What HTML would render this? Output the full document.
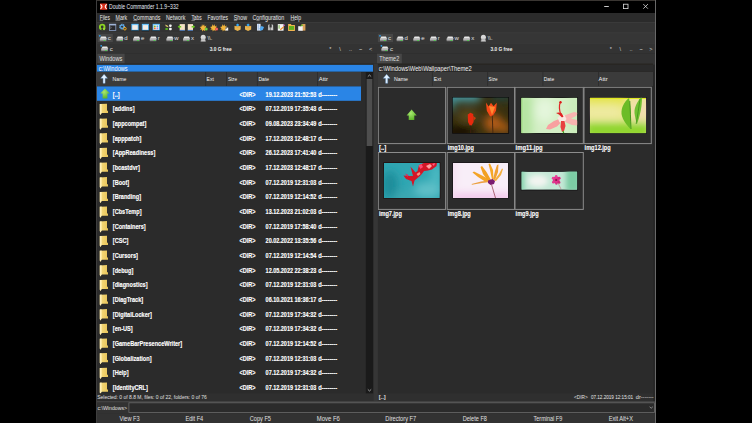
<!DOCTYPE html><html><head><meta charset="utf-8"><style>
html,body{margin:0;padding:0;background:#000;width:752px;height:423px;overflow:hidden;position:relative;}
text{font-family:"Liberation Sans",sans-serif;}
</style></head><body>
<svg width="752" height="423" viewBox="0 0 752 423" style="position:absolute;left:0;top:0" font-family="Liberation Sans, sans-serif"><rect x="0" y="0" width="752" height="423" fill="#000" />
<rect x="96" y="0" width="560" height="423" fill="#2b2b2b" />
<rect x="96" y="0" width="560" height="1" fill="#3a3632" />
<rect x="96" y="0" width="1" height="423" fill="#3e3e3e" />
<rect x="655" y="0" width="1" height="423" fill="#686868" />
<rect x="653" y="13" width="2" height="410" fill="#272727" />
<rect x="97" y="1" width="558" height="12" fill="#000000" />
<rect x="100" y="3.5" width="7.2" height="6.3" fill="#d8301c" />
<path d="M100.5 4.4Q103.4 6.65 100.5 8.9M106.7 4.4Q103.8 6.65 106.7 8.9" stroke="#fff" stroke-width="1.1" fill="none"/>
<text x="109" y="9.0" font-size="6.4" textLength="69.6" lengthAdjust="spacingAndGlyphs" fill="#e6ecf6" >Double Commander 1.1.9~332</text>
<rect x="604.2" y="6" width="4.6" height="0.9" fill="#e0e0e0" />
<rect x="623.6" y="4.2" width="4.4" height="4.4" fill="none" stroke="#e0e0e0" stroke-width="0.8"/>
<path d="M643.3 4.1l4.6 4.6M647.9 4.1l-4.6 4.6" stroke="#e0e0e0" stroke-width="0.8"/>
<rect x="97" y="13" width="558" height="9" fill="#2b2b2b" />
<text x="99.7" y="19.7" font-size="6.3" textLength="10.2" lengthAdjust="spacingAndGlyphs" fill="#e8e8e8" >Files</text>
<text x="115.5" y="19.7" font-size="6.3" textLength="11.7" lengthAdjust="spacingAndGlyphs" fill="#e8e8e8" >Mark</text>
<text x="133.3" y="19.7" font-size="6.3" textLength="27.1" lengthAdjust="spacingAndGlyphs" fill="#e8e8e8" >Commands</text>
<text x="166" y="19.7" font-size="6.3" textLength="19.5" lengthAdjust="spacingAndGlyphs" fill="#e8e8e8" >Network</text>
<text x="191.4" y="19.7" font-size="6.3" textLength="10.2" lengthAdjust="spacingAndGlyphs" fill="#e8e8e8" >Tabs</text>
<text x="207.5" y="19.7" font-size="6.3" textLength="20.5" lengthAdjust="spacingAndGlyphs" fill="#e8e8e8" >Favorites</text>
<text x="233.8" y="19.7" font-size="6.3" textLength="13.2" lengthAdjust="spacingAndGlyphs" fill="#e8e8e8" >Show</text>
<text x="252.5" y="19.7" font-size="6.3" textLength="31.8" lengthAdjust="spacingAndGlyphs" fill="#e8e8e8" >Configuration</text>
<text x="290.6" y="19.7" font-size="6.3" textLength="10.5" lengthAdjust="spacingAndGlyphs" fill="#e8e8e8" >Help</text>
<rect x="99.7" y="20.5" width="3.4" height="0.55" fill="#b8b8b8" />
<rect x="115.5" y="20.5" width="4.8" height="0.55" fill="#b8b8b8" />
<rect x="133.3" y="20.5" width="4.0" height="0.55" fill="#b8b8b8" />
<rect x="191.4" y="20.5" width="3.4" height="0.55" fill="#b8b8b8" />
<rect x="233.8" y="20.5" width="3.4" height="0.55" fill="#b8b8b8" />
<rect x="256.4" y="20.5" width="3.2" height="0.55" fill="#b8b8b8" />
<rect x="290.6" y="20.5" width="4.2" height="0.55" fill="#b8b8b8" />
<rect x="97" y="22" width="558" height="10.5" fill="#333333" />
<g transform="translate(99 23.8)"><circle cx="3.2" cy="3.1" r="2.3" fill="none" stroke="#8cd424" stroke-width="1.9"/><rect x="2.4" y="4.6" width="1.6" height="2" fill="#2f2f2f"/><path d="M4.2 4.4l2.4 0.4l-1.6 1.8z" fill="#a8e040"/></g>
<g transform="translate(109 23.8)"><rect x="0.4" y="0.4" width="6.4" height="6.2" fill="#2a2a2e" stroke="#8aa0c8" stroke-width="0.8"/><rect x="0.4" y="0.3" width="6.4" height="1.3" fill="#a8bde0"/><path d="M1.3 3l1 0.8l-1 0.8" stroke="#d0d0d0" stroke-width="0.5" fill="none"/></g>
<g transform="translate(119.2 23.8)"><circle cx="2.9" cy="2.9" r="2.2" fill="none" stroke="#6ab4f0" stroke-width="1.5" stroke-dasharray="1.2 0.5"/><circle cx="2.9" cy="2.9" r="1.6" fill="none" stroke="#5aa8e8" stroke-width="1"/><circle cx="5.7" cy="4.9" r="1.3" fill="none" stroke="#f4a818" stroke-width="1"/></g>
<g transform="translate(131.4 23.8)"><rect x="0.4" y="0.4" width="6.4" height="6" fill="#f2ece6" stroke="#38a8f0" stroke-width="0.8"/><rect x="0.4" y="0.3" width="6.4" height="1" fill="#70c8ff"/><rect x="0" y="6.5" width="7.2" height="0.7" fill="#0c2030" opacity="0.8"/></g>
<rect x="141" y="22.9" width="9" height="9.3" fill="#2c2c2c" stroke="#4a4444" stroke-width="0.6"/>
<g transform="translate(141.8 23.8)"><rect x="0.4" y="0.4" width="6.4" height="6" fill="#f2ece6" stroke="#38a8f0" stroke-width="0.8"/><rect x="0.4" y="0.3" width="6.4" height="1" fill="#70c8ff"/><rect x="0" y="6.5" width="7.2" height="0.7" fill="#0c2030" opacity="0.8"/></g>
<g transform="translate(152.6 23.8)"><rect x="0.4" y="0.4" width="6.4" height="6" fill="#f2ece6" stroke="#38a8f0" stroke-width="0.8"/><rect x="0.4" y="0.3" width="6.4" height="1" fill="#70c8ff"/><rect x="0" y="6.5" width="7.2" height="0.7" fill="#0c2030" opacity="0.8"/></g>
<g transform="translate(152.6 23.8)"><circle cx="2.2" cy="2.6" r="0.9" fill="#78b828"/><circle cx="4.8" cy="2.6" r="0.9" fill="#48a8f0"/><circle cx="2.2" cy="4.6" r="0.9" fill="#f87020"/><circle cx="4.8" cy="4.6" r="0.9" fill="#b080f0"/></g>
<g transform="translate(164.8 23.8)"><path d="M0.5 0.6l2.8 1.6l0.2 1.3l-2.6-1z" fill="#e8d070"/><ellipse cx="1.8" cy="5.2" rx="1.5" ry="0.9" fill="#58b820"/><rect x="4.3" y="0.6" width="2.6" height="2.5" rx="0.8" fill="#f4f4f4"/><rect x="4.3" y="3.9" width="2.6" height="2.6" rx="0.8" fill="#f4f4f4"/></g>
<g transform="translate(177.7 23.8)"><rect x="2" y="0.3" width="5.2" height="6.3" fill="#f4e2c4"/><rect x="2" y="6.1" width="5.2" height="0.8" fill="#3a70c0"/><path d="M0 3l2-1.8v1h1.5v1.6h-1.5v1z" fill="#68c820"/></g>
<g transform="translate(187.7 23.8)"><rect x="0.1" y="0.3" width="5.2" height="6.3" fill="#f4e2c4"/><rect x="0.1" y="6.1" width="5.2" height="0.8" fill="#3a70c0"/><path d="M7.4 3l-2-1.8v1h-1.5v1.6h1.5v1z" fill="#68c820"/></g>
<g transform="translate(200.4 23.8)"><path d="M1.6 0.2l0.8 2l1.3-1.8l0.5 2.2l1.8-0.8l-0.8 2l1.4 1l-2 0.6l0.2 2l-1.6-1.2l-1.2 1.6l-0.4-2l-2 0.2l1.2-1.6l-1.6-1.2l2 -0.4z" fill="#f2b43a"/></g>
<g transform="translate(200.4 23.8)"><circle cx="5.8" cy="5.2" r="1.6" fill="#5cc028"/><rect x="5" y="5" width="1.6" height="0.5" fill="#f4f4f4" opacity="0.8"/></g>
<g transform="translate(210.8 23.8)"><path d="M1.6 0.2l0.8 2l1.3-1.8l0.5 2.2l1.8-0.8l-0.8 2l1.4 1l-2 0.6l0.2 2l-1.6-1.2l-1.2 1.6l-0.4-2l-2 0.2l1.2-1.6l-1.6-1.2l2 -0.4z" fill="#f2b43a"/></g>
<g transform="translate(210.8 23.8)"><circle cx="5.8" cy="5.2" r="1.6" fill="#e84848"/><rect x="5" y="5" width="1.6" height="0.5" fill="#f4f4f4" opacity="0.8"/></g>
<g transform="translate(220.8 23.8)"><path d="M1.6 0.2l0.8 2l1.3-1.8l0.5 2.2l1.8-0.8l-0.8 2l1.4 1l-2 0.6l0.2 2l-1.6-1.2l-1.2 1.6l-0.4-2l-2 0.2l1.2-1.6l-1.6-1.2l2 -0.4z" fill="#f2b43a"/></g>
<g transform="translate(220.8 23.8)"><rect x="4.6" y="3.8" width="2.8" height="3" fill="#f0f0f0"/><circle cx="5.2" cy="4.3" r="0.7" fill="#101010"/></g>
<g transform="translate(234.3 23.8)"><path d="M0.2 2.2h6.2v3.4l-3.1 1.6l-3.1-1.6z" fill="#e8b450"/><path d="M0.2 2.2l3.1 1.2l3.1-1.2" stroke="#c08830" stroke-width="0.4" fill="none"/><path d="M3.3 -0.2l1.7 1.4l-1.7 1.4l-1.7-1.4z" fill="#38a8f4"/></g>
<g transform="translate(244.8 23.8)"><path d="M0.2 2.2h6.2v3.4l-3.1 1.6l-3.1-1.6z" fill="#e8b450"/><path d="M0.2 2.2l3.1 1.2l3.1-1.2" stroke="#c08830" stroke-width="0.4" fill="none"/><path d="M3.3 -0.2l1.7 1.4l-1.7 1.4l-1.7-1.4z" fill="#38a8f4"/></g>
<g transform="translate(256.7 23.8)"><rect x="0.3" y="0" width="3.6" height="6.8" fill="#dce8f8"/><rect x="1" y="0.5" width="1.2" height="5.5" fill="#a8c4e8"/><path d="M2.8 4.8l2-2.5l2.5 0.8l-1.2 3.2l-2.4 0.7z" fill="#50a8f0"/></g>
<g transform="translate(267.1 23.8)"><path d="M1 1.2l1.4-1v3.6h1v2.6h-2.6z" fill="#b8b8b8"/><path d="M6 1.2l-1.4-1v3.6h-1v2.6h2.6z" fill="#c8c8c8"/></g>
<g transform="translate(277.5 23.8)"><rect x="0.3" y="0.3" width="5.8" height="6.6" fill="#f4f4f4"/><rect x="1.1" y="1.3" width="1" height="3.6" fill="#78b848"/><path d="M2.8 6l3.6-3.2" stroke="#f08828" stroke-width="1.2"/><circle cx="6.6" cy="1.4" r="0.7" fill="#e060e0"/></g>
<g transform="translate(287.9 23.8)"><path d="M0.2 0.3h2.8l0.6 0.8h3.4v6h-6.8z" fill="#f0b450"/><rect x="1.1" y="2.2" width="5" height="3.9" fill="#62b01c"/></g>
<g transform="translate(298 23.8)"><rect x="3.6" y="0.2" width="3.8" height="6.6" fill="#d8a058"/><path d="M0.2 2.4h4.5v4.6h-4.5z" fill="#f2f2f6"/><path d="M1.8 2.8l2.6-2.4l0.8 1.4z" fill="#58c028"/></g>
<rect x="97" y="22" width="558" height="0.8" fill="#3c3c3c" />
<rect x="97" y="32.5" width="558" height="10.5" fill="#363636" />
<rect x="97" y="32.5" width="558" height="0.8" fill="#3e3e3e" />
<rect x="97.7" y="33.9" width="15.1" height="8.2" fill="#474747" />
<path d="M99.89999999999999 38.8l1.2-2.2h4.6l1.2 2.2z" fill="#e8e8e8"/>
<rect x="99.8" y="38.8" width="6.6" height="2.4" fill="#8a8a8a"/>
<rect x="99.8" y="38.8" width="6.6" height="0.6" fill="#f4f4f4"/>
<rect x="103.7" y="40.0" width="1.8" height="0.9" fill="#48d048"/>
<text x="107.7" y="40.3" font-size="6" fill="#e0e0e0" >c</text>
<path d="M116.54999999999998 38.8l1.2-2.2h4.6l1.2 2.2z" fill="#e8e8e8"/>
<rect x="116.44999999999999" y="38.8" width="6.6" height="2.4" fill="#8a8a8a"/>
<rect x="116.44999999999999" y="38.8" width="6.6" height="0.6" fill="#f4f4f4"/>
<rect x="120.35" y="40.0" width="1.8" height="0.9" fill="#48d048"/>
<text x="124.35" y="40.3" font-size="6" fill="#e0e0e0" >d</text>
<path d="M133.2 38.8l1.2-2.2h4.6l1.2 2.2z" fill="#e8e8e8"/>
<rect x="133.1" y="38.8" width="6.6" height="2.4" fill="#8a8a8a"/>
<rect x="133.1" y="38.8" width="6.6" height="0.6" fill="#f4f4f4"/>
<rect x="137.0" y="40.0" width="1.8" height="0.9" fill="#48d048"/>
<text x="141.0" y="40.3" font-size="6" fill="#e0e0e0" >e</text>
<path d="M149.85 38.8l1.2-2.2h4.6l1.2 2.2z" fill="#e8e8e8"/>
<rect x="149.75" y="38.8" width="6.6" height="2.4" fill="#8a8a8a"/>
<rect x="149.75" y="38.8" width="6.6" height="0.6" fill="#f4f4f4"/>
<rect x="153.65" y="40.0" width="1.8" height="0.9" fill="#48d048"/>
<text x="157.65" y="40.3" font-size="6" fill="#e0e0e0" >r</text>
<path d="M166.49999999999997 38.8l1.2-2.2h4.6l1.2 2.2z" fill="#e8e8e8"/>
<rect x="166.39999999999998" y="38.8" width="6.6" height="2.4" fill="#8a8a8a"/>
<rect x="166.39999999999998" y="38.8" width="6.6" height="0.6" fill="#f4f4f4"/>
<rect x="170.29999999999998" y="40.0" width="1.8" height="0.9" fill="#48d048"/>
<text x="174.29999999999998" y="40.3" font-size="6" fill="#e0e0e0" >w</text>
<path d="M183.15 38.8l1.2-2.2h4.6l1.2 2.2z" fill="#e8e8e8"/>
<rect x="183.05" y="38.8" width="6.6" height="2.4" fill="#8a8a8a"/>
<rect x="183.05" y="38.8" width="6.6" height="0.6" fill="#f4f4f4"/>
<rect x="186.95000000000002" y="40.0" width="1.8" height="0.9" fill="#48d048"/>
<text x="190.95000000000002" y="40.3" font-size="6" fill="#e0e0e0" >x</text>
<circle cx="203.2" cy="37.3" r="2.5" fill="#d8d8d8"/><rect x="201.2" y="38.6" width="4" height="2.6" fill="#b8b8b8"/><rect x="200.6" y="40.6" width="5.2" height="0.8" fill="#e0e0e0"/>
<text x="207.5" y="40.3" font-size="5.8" fill="#e0e0e0" >\\.</text>
<circle cx="99.8" cy="35.8" r="0.9" fill="#30a0f0"/>
<rect x="377.9" y="33.9" width="15.1" height="8.2" fill="#474747" />
<path d="M380.1 38.8l1.2-2.2h4.6l1.2 2.2z" fill="#e8e8e8"/>
<rect x="380.0" y="38.8" width="6.6" height="2.4" fill="#8a8a8a"/>
<rect x="380.0" y="38.8" width="6.6" height="0.6" fill="#f4f4f4"/>
<rect x="383.9" y="40.0" width="1.8" height="0.9" fill="#48d048"/>
<text x="387.9" y="40.3" font-size="6" fill="#e0e0e0" >c</text>
<path d="M396.75 38.8l1.2-2.2h4.6l1.2 2.2z" fill="#e8e8e8"/>
<rect x="396.65" y="38.8" width="6.6" height="2.4" fill="#8a8a8a"/>
<rect x="396.65" y="38.8" width="6.6" height="0.6" fill="#f4f4f4"/>
<rect x="400.54999999999995" y="40.0" width="1.8" height="0.9" fill="#48d048"/>
<text x="404.54999999999995" y="40.3" font-size="6" fill="#e0e0e0" >d</text>
<path d="M413.40000000000003 38.8l1.2-2.2h4.6l1.2 2.2z" fill="#e8e8e8"/>
<rect x="413.3" y="38.8" width="6.6" height="2.4" fill="#8a8a8a"/>
<rect x="413.3" y="38.8" width="6.6" height="0.6" fill="#f4f4f4"/>
<rect x="417.2" y="40.0" width="1.8" height="0.9" fill="#48d048"/>
<text x="421.2" y="40.3" font-size="6" fill="#e0e0e0" >e</text>
<path d="M430.05 38.8l1.2-2.2h4.6l1.2 2.2z" fill="#e8e8e8"/>
<rect x="429.95" y="38.8" width="6.6" height="2.4" fill="#8a8a8a"/>
<rect x="429.95" y="38.8" width="6.6" height="0.6" fill="#f4f4f4"/>
<rect x="433.84999999999997" y="40.0" width="1.8" height="0.9" fill="#48d048"/>
<text x="437.84999999999997" y="40.3" font-size="6" fill="#e0e0e0" >r</text>
<path d="M446.70000000000005 38.8l1.2-2.2h4.6l1.2 2.2z" fill="#e8e8e8"/>
<rect x="446.6" y="38.8" width="6.6" height="2.4" fill="#8a8a8a"/>
<rect x="446.6" y="38.8" width="6.6" height="0.6" fill="#f4f4f4"/>
<rect x="450.5" y="40.0" width="1.8" height="0.9" fill="#48d048"/>
<text x="454.5" y="40.3" font-size="6" fill="#e0e0e0" >w</text>
<path d="M463.35 38.8l1.2-2.2h4.6l1.2 2.2z" fill="#e8e8e8"/>
<rect x="463.25" y="38.8" width="6.6" height="2.4" fill="#8a8a8a"/>
<rect x="463.25" y="38.8" width="6.6" height="0.6" fill="#f4f4f4"/>
<rect x="467.15" y="40.0" width="1.8" height="0.9" fill="#48d048"/>
<text x="471.15" y="40.3" font-size="6" fill="#e0e0e0" >x</text>
<circle cx="483.4" cy="37.3" r="2.5" fill="#d8d8d8"/><rect x="481.4" y="38.6" width="4" height="2.6" fill="#b8b8b8"/><rect x="480.79999999999995" y="40.6" width="5.2" height="0.8" fill="#e0e0e0"/>
<text x="487.7" y="40.3" font-size="5.8" fill="#e0e0e0" >\\.</text>
<circle cx="380.0" cy="35.8" r="0.9" fill="#30a0f0"/>
<rect x="97" y="43" width="558" height="10.7" fill="#333333" />
<rect x="97" y="43" width="558" height="0.7" fill="#3a3a3a" />
<path d="M101.3 48.8l1.2-2.2h4.6l1.2 2.2z" fill="#e8e8e8"/>
<rect x="101.2" y="48.8" width="6.6" height="2.4" fill="#8a8a8a"/>
<rect x="101.2" y="48.8" width="6.6" height="0.6" fill="#f4f4f4"/>
<rect x="105.10000000000001" y="50.0" width="1.8" height="0.9" fill="#48d048"/>
<circle cx="101.2" cy="45.8" r="0.9" fill="#30a0f0"/>
<text x="109.8" y="50.8" font-size="6" fill="#e0e0e0" >c</text>
<path d="M381.5 48.8l1.2-2.2h4.6l1.2 2.2z" fill="#e8e8e8"/>
<rect x="381.4" y="48.8" width="6.6" height="2.4" fill="#8a8a8a"/>
<rect x="381.4" y="48.8" width="6.6" height="0.6" fill="#f4f4f4"/>
<rect x="385.29999999999995" y="50.0" width="1.8" height="0.9" fill="#48d048"/>
<circle cx="381.4" cy="45.8" r="0.9" fill="#30a0f0"/>
<text x="390.0" y="50.8" font-size="6" fill="#e0e0e0" >c</text>
<text x="209.7" y="50.9" font-size="5.8" textLength="21.9" lengthAdjust="spacingAndGlyphs" font-weight="bold" fill="#f0f0f0" >3.0 G free</text>
<text x="490.5" y="50.9" font-size="5.8" textLength="21.9" lengthAdjust="spacingAndGlyphs" font-weight="bold" fill="#f0f0f0" >3.0 G free</text>
<text x="329.3" y="50.8" font-size="5.5" fill="#d8d8d8" >*</text>
<text x="339.2" y="50.8" font-size="5.5" fill="#d8d8d8" >\</text>
<text x="349.1" y="50.8" font-size="5.5" fill="#d8d8d8" >..</text>
<text x="359.0" y="50.8" font-size="5.5" fill="#d8d8d8" >~</text>
<text x="368.90000000000003" y="50.8" font-size="5.5" fill="#d8d8d8" >&lt;</text>
<text x="609.7" y="50.8" font-size="5.5" fill="#d8d8d8" >*</text>
<text x="619.6" y="50.8" font-size="5.5" fill="#d8d8d8" >\</text>
<text x="629.5" y="50.8" font-size="5.5" fill="#d8d8d8" >..</text>
<text x="639.4000000000001" y="50.8" font-size="5.5" fill="#d8d8d8" >~</text>
<text x="649.3000000000001" y="50.8" font-size="5.5" fill="#d8d8d8" >&gt;</text>
<rect x="97" y="53.7" width="558" height="11" fill="#333333" />
<rect x="97.4" y="53.7" width="27.2" height="9.8" fill="#474747" />
<text x="99.6" y="61.2" font-size="6.6" textLength="22.6" lengthAdjust="spacingAndGlyphs" fill="#e0e0e0" >Windows</text>
<rect x="377" y="53.7" width="24.8" height="9.8" fill="#474747" />
<text x="379.2" y="61.2" font-size="6.6" textLength="20" lengthAdjust="spacingAndGlyphs" fill="#e0e0e0" >Theme2</text>
<rect x="97" y="64.6" width="276" height="7.2" fill="#2a85e6" />
<text x="98.8" y="70.9" font-size="6.7" textLength="28.9" lengthAdjust="spacingAndGlyphs" fill="#ffffff" >c:\Windows</text>
<rect x="377" y="64.6" width="276" height="7.4" fill="#2b2b2b" />
<text x="378.7" y="70.9" font-size="6.7" textLength="93" lengthAdjust="spacingAndGlyphs" fill="#f0f0f0" >c:\Windows\Web\Wallpaper\Theme2</text>
<rect x="97" y="63.6" width="556" height="1" fill="#26231f" />
<rect x="97" y="71.8" width="556" height="0.6" fill="#2a2622" />
<rect x="97" y="72" width="264" height="14" fill="#3b3b3b" />
<rect x="205.3" y="72" width="0.8" height="14" fill="#2c2c2c" />
<rect x="226" y="72" width="0.8" height="14" fill="#2c2c2c" />
<rect x="256.9" y="72" width="0.8" height="14" fill="#2c2c2c" />
<rect x="317.2" y="72" width="0.8" height="14" fill="#2c2c2c" />
<text x="112.6" y="80.9" font-size="5.5" textLength="13.7" lengthAdjust="spacingAndGlyphs" fill="#f4f4f4" >Name</text>
<text x="206.6" y="80.9" font-size="5.5" textLength="7.2" lengthAdjust="spacingAndGlyphs" fill="#f4f4f4" >Ext</text>
<text x="227.9" y="80.9" font-size="5.5" textLength="9.1" lengthAdjust="spacingAndGlyphs" fill="#f4f4f4" >Size</text>
<text x="258.5" y="80.9" font-size="5.5" textLength="10.6" lengthAdjust="spacingAndGlyphs" fill="#f4f4f4" >Date</text>
<text x="318.8" y="80.9" font-size="5.5" textLength="9.1" lengthAdjust="spacingAndGlyphs" fill="#f4f4f4" >Attr</text>
<path d="M104.1 74.3L107.5 78.3H105.1V83.3H103.1V78.3H100.7Z" fill="#e4f2ff" stroke="#6aa8e8" stroke-width="0.35"/>
<rect x="377" y="72" width="276" height="14" fill="#3b3b3b" />
<rect x="431.9" y="72" width="0.8" height="14" fill="#2c2c2c" />
<rect x="487.3" y="72" width="0.8" height="14" fill="#2c2c2c" />
<rect x="542.5" y="72" width="0.8" height="14" fill="#2c2c2c" />
<rect x="598" y="72" width="0.8" height="14" fill="#2c2c2c" />
<text x="394" y="80.9" font-size="5.5" textLength="14" lengthAdjust="spacingAndGlyphs" fill="#f4f4f4" >Name</text>
<text x="433.8" y="80.9" font-size="5.5" textLength="7.4" lengthAdjust="spacingAndGlyphs" fill="#f4f4f4" >Ext</text>
<text x="488.6" y="80.9" font-size="5.5" textLength="8.9" lengthAdjust="spacingAndGlyphs" fill="#f4f4f4" >Size</text>
<text x="543.8" y="80.9" font-size="5.5" textLength="10.4" lengthAdjust="spacingAndGlyphs" fill="#f4f4f4" >Date</text>
<text x="598.6" y="80.9" font-size="5.5" textLength="9.0" lengthAdjust="spacingAndGlyphs" fill="#f4f4f4" >Attr</text>
<path d="M386.65 74.3L390 78.3H387.65V83.3H385.65V78.3H383.3Z" fill="#e4f2ff" stroke="#6aa8e8" stroke-width="0.35"/>
<rect x="97" y="86" width="269" height="308" fill="#2b2b2b" />
<rect x="97" y="86.4" width="264" height="14.4" fill="#2a85e6" />
<path d="M105 88.4L109.8 93.6H107.4V98.5H102.6V93.6H100.2Z" fill="url(#arrowg)"/>
<text transform="translate(112.8 96.7) scale(0.86 1)" font-size="6.5" font-weight="bold" fill="#ffffff" stroke="#ffffff" stroke-width="0.14">[..]</text>
<text x="239.6" y="96.7" font-size="6.4" textLength="16.0" lengthAdjust="spacingAndGlyphs" font-weight="bold" fill="#ffffff" stroke="#ffffff" stroke-width="0.14">&lt;DIR&gt;</text>
<text x="265.6" y="96.7" font-size="6.4" textLength="50.8" lengthAdjust="spacingAndGlyphs" font-weight="bold" fill="#ffffff" stroke="#ffffff" stroke-width="0.14">19.12.2023 21:52:53</text>
<text x="318.2" y="96.7" font-size="6.4" textLength="18.9" lengthAdjust="spacingAndGlyphs" font-weight="bold" fill="#ffffff" stroke="#ffffff" stroke-width="0.14">d--------</text>
<path d="M99.8 104.065L107 103.765V110.565L108 111.065V113.065H101.5L100.5 115.065L99.8 113.565Z" fill="url(#fold)"/>
<path d="M99.8 104.065L101.6 103.965V113.065L100.5 115.065L99.8 113.565Z" fill="#fff0b8"/>
<text transform="translate(112.8 111.365) scale(0.86 1)" font-size="6.5" font-weight="bold" fill="#ffffff" stroke="#ffffff" stroke-width="0.14">[addins]</text>
<text x="239.6" y="111.365" font-size="6.4" textLength="16.0" lengthAdjust="spacingAndGlyphs" font-weight="bold" fill="#ffffff" stroke="#ffffff" stroke-width="0.14">&lt;DIR&gt;</text>
<text x="265.6" y="111.365" font-size="6.4" textLength="50.8" lengthAdjust="spacingAndGlyphs" font-weight="bold" fill="#ffffff" stroke="#ffffff" stroke-width="0.14">07.12.2019 17:35:43</text>
<text x="318.2" y="111.365" font-size="6.4" textLength="18.9" lengthAdjust="spacingAndGlyphs" font-weight="bold" fill="#ffffff" stroke="#ffffff" stroke-width="0.14">d--------</text>
<path d="M99.8 118.73L107 118.43V125.23L108 125.73V127.73H101.5L100.5 129.73000000000002L99.8 128.23000000000002Z" fill="url(#fold)"/>
<path d="M99.8 118.73L101.6 118.63000000000001V127.73L100.5 129.73000000000002L99.8 128.23000000000002Z" fill="#fff0b8"/>
<text transform="translate(112.8 126.03) scale(0.86 1)" font-size="6.5" font-weight="bold" fill="#ffffff" stroke="#ffffff" stroke-width="0.14">[appcompat]</text>
<text x="239.6" y="126.03" font-size="6.4" textLength="16.0" lengthAdjust="spacingAndGlyphs" font-weight="bold" fill="#ffffff" stroke="#ffffff" stroke-width="0.14">&lt;DIR&gt;</text>
<text x="265.6" y="126.03" font-size="6.4" textLength="50.8" lengthAdjust="spacingAndGlyphs" font-weight="bold" fill="#ffffff" stroke="#ffffff" stroke-width="0.14">09.08.2023 23:34:49</text>
<text x="318.2" y="126.03" font-size="6.4" textLength="18.9" lengthAdjust="spacingAndGlyphs" font-weight="bold" fill="#ffffff" stroke="#ffffff" stroke-width="0.14">d--------</text>
<path d="M99.8 133.395L107 133.095V139.895L108 140.395V142.395H101.5L100.5 144.395L99.8 142.895Z" fill="url(#fold)"/>
<path d="M99.8 133.395L101.6 133.295V142.395L100.5 144.395L99.8 142.895Z" fill="#fff0b8"/>
<text transform="translate(112.8 140.695) scale(0.86 1)" font-size="6.5" font-weight="bold" fill="#ffffff" stroke="#ffffff" stroke-width="0.14">[apppatch]</text>
<text x="239.6" y="140.695" font-size="6.4" textLength="16.0" lengthAdjust="spacingAndGlyphs" font-weight="bold" fill="#ffffff" stroke="#ffffff" stroke-width="0.14">&lt;DIR&gt;</text>
<text x="265.6" y="140.695" font-size="6.4" textLength="50.8" lengthAdjust="spacingAndGlyphs" font-weight="bold" fill="#ffffff" stroke="#ffffff" stroke-width="0.14">17.12.2023 12:48:17</text>
<text x="318.2" y="140.695" font-size="6.4" textLength="18.9" lengthAdjust="spacingAndGlyphs" font-weight="bold" fill="#ffffff" stroke="#ffffff" stroke-width="0.14">d--------</text>
<path d="M99.8 148.06L107 147.76V154.56L108 155.06V157.06H101.5L100.5 159.06L99.8 157.56Z" fill="url(#fold)"/>
<path d="M99.8 148.06L101.6 147.95999999999998V157.06L100.5 159.06L99.8 157.56Z" fill="#fff0b8"/>
<text transform="translate(112.8 155.35999999999999) scale(0.86 1)" font-size="6.5" font-weight="bold" fill="#ffffff" stroke="#ffffff" stroke-width="0.14">[AppReadiness]</text>
<text x="239.6" y="155.35999999999999" font-size="6.4" textLength="16.0" lengthAdjust="spacingAndGlyphs" font-weight="bold" fill="#ffffff" stroke="#ffffff" stroke-width="0.14">&lt;DIR&gt;</text>
<text x="265.6" y="155.35999999999999" font-size="6.4" textLength="50.8" lengthAdjust="spacingAndGlyphs" font-weight="bold" fill="#ffffff" stroke="#ffffff" stroke-width="0.14">26.12.2023 17:41:40</text>
<text x="318.2" y="155.35999999999999" font-size="6.4" textLength="18.9" lengthAdjust="spacingAndGlyphs" font-weight="bold" fill="#ffffff" stroke="#ffffff" stroke-width="0.14">d--------</text>
<path d="M99.8 162.725L107 162.42499999999998V169.225L108 169.725V171.725H101.5L100.5 173.725L99.8 172.225Z" fill="url(#fold)"/>
<path d="M99.8 162.725L101.6 162.62499999999997V171.725L100.5 173.725L99.8 172.225Z" fill="#fff0b8"/>
<text transform="translate(112.8 170.02499999999998) scale(0.86 1)" font-size="6.5" font-weight="bold" fill="#ffffff" stroke="#ffffff" stroke-width="0.14">[bcastdvr]</text>
<text x="239.6" y="170.02499999999998" font-size="6.4" textLength="16.0" lengthAdjust="spacingAndGlyphs" font-weight="bold" fill="#ffffff" stroke="#ffffff" stroke-width="0.14">&lt;DIR&gt;</text>
<text x="265.6" y="170.02499999999998" font-size="6.4" textLength="50.8" lengthAdjust="spacingAndGlyphs" font-weight="bold" fill="#ffffff" stroke="#ffffff" stroke-width="0.14">17.12.2023 12:48:17</text>
<text x="318.2" y="170.02499999999998" font-size="6.4" textLength="18.9" lengthAdjust="spacingAndGlyphs" font-weight="bold" fill="#ffffff" stroke="#ffffff" stroke-width="0.14">d--------</text>
<path d="M99.8 177.39L107 177.08999999999997V183.89L108 184.39V186.39H101.5L100.5 188.39L99.8 186.89Z" fill="url(#fold)"/>
<path d="M99.8 177.39L101.6 177.28999999999996V186.39L100.5 188.39L99.8 186.89Z" fill="#fff0b8"/>
<text transform="translate(112.8 184.68999999999997) scale(0.86 1)" font-size="6.5" font-weight="bold" fill="#ffffff" stroke="#ffffff" stroke-width="0.14">[Boot]</text>
<text x="239.6" y="184.68999999999997" font-size="6.4" textLength="16.0" lengthAdjust="spacingAndGlyphs" font-weight="bold" fill="#ffffff" stroke="#ffffff" stroke-width="0.14">&lt;DIR&gt;</text>
<text x="265.6" y="184.68999999999997" font-size="6.4" textLength="50.8" lengthAdjust="spacingAndGlyphs" font-weight="bold" fill="#ffffff" stroke="#ffffff" stroke-width="0.14">07.12.2019 12:31:03</text>
<text x="318.2" y="184.68999999999997" font-size="6.4" textLength="18.9" lengthAdjust="spacingAndGlyphs" font-weight="bold" fill="#ffffff" stroke="#ffffff" stroke-width="0.14">d--------</text>
<path d="M99.8 192.055L107 191.755V198.555L108 199.055V201.055H101.5L100.5 203.055L99.8 201.555Z" fill="url(#fold)"/>
<path d="M99.8 192.055L101.6 191.95499999999998V201.055L100.5 203.055L99.8 201.555Z" fill="#fff0b8"/>
<text transform="translate(112.8 199.355) scale(0.86 1)" font-size="6.5" font-weight="bold" fill="#ffffff" stroke="#ffffff" stroke-width="0.14">[Branding]</text>
<text x="239.6" y="199.355" font-size="6.4" textLength="16.0" lengthAdjust="spacingAndGlyphs" font-weight="bold" fill="#ffffff" stroke="#ffffff" stroke-width="0.14">&lt;DIR&gt;</text>
<text x="265.6" y="199.355" font-size="6.4" textLength="50.8" lengthAdjust="spacingAndGlyphs" font-weight="bold" fill="#ffffff" stroke="#ffffff" stroke-width="0.14">07.12.2019 12:14:52</text>
<text x="318.2" y="199.355" font-size="6.4" textLength="18.9" lengthAdjust="spacingAndGlyphs" font-weight="bold" fill="#ffffff" stroke="#ffffff" stroke-width="0.14">d--------</text>
<path d="M99.8 206.72L107 206.42V213.22L108 213.72V215.72H101.5L100.5 217.72L99.8 216.22Z" fill="url(#fold)"/>
<path d="M99.8 206.72L101.6 206.61999999999998V215.72L100.5 217.72L99.8 216.22Z" fill="#fff0b8"/>
<text transform="translate(112.8 214.01999999999998) scale(0.86 1)" font-size="6.5" font-weight="bold" fill="#ffffff" stroke="#ffffff" stroke-width="0.14">[CbsTemp]</text>
<text x="239.6" y="214.01999999999998" font-size="6.4" textLength="16.0" lengthAdjust="spacingAndGlyphs" font-weight="bold" fill="#ffffff" stroke="#ffffff" stroke-width="0.14">&lt;DIR&gt;</text>
<text x="265.6" y="214.01999999999998" font-size="6.4" textLength="50.8" lengthAdjust="spacingAndGlyphs" font-weight="bold" fill="#ffffff" stroke="#ffffff" stroke-width="0.14">13.12.2023 21:02:03</text>
<text x="318.2" y="214.01999999999998" font-size="6.4" textLength="18.9" lengthAdjust="spacingAndGlyphs" font-weight="bold" fill="#ffffff" stroke="#ffffff" stroke-width="0.14">d--------</text>
<path d="M99.8 221.385L107 221.08499999999998V227.885L108 228.385V230.385H101.5L100.5 232.385L99.8 230.885Z" fill="url(#fold)"/>
<path d="M99.8 221.385L101.6 221.28499999999997V230.385L100.5 232.385L99.8 230.885Z" fill="#fff0b8"/>
<text transform="translate(112.8 228.68499999999997) scale(0.86 1)" font-size="6.5" font-weight="bold" fill="#ffffff" stroke="#ffffff" stroke-width="0.14">[Containers]</text>
<text x="239.6" y="228.68499999999997" font-size="6.4" textLength="16.0" lengthAdjust="spacingAndGlyphs" font-weight="bold" fill="#ffffff" stroke="#ffffff" stroke-width="0.14">&lt;DIR&gt;</text>
<text x="265.6" y="228.68499999999997" font-size="6.4" textLength="50.8" lengthAdjust="spacingAndGlyphs" font-weight="bold" fill="#ffffff" stroke="#ffffff" stroke-width="0.14">07.12.2019 17:58:40</text>
<text x="318.2" y="228.68499999999997" font-size="6.4" textLength="18.9" lengthAdjust="spacingAndGlyphs" font-weight="bold" fill="#ffffff" stroke="#ffffff" stroke-width="0.14">d--------</text>
<path d="M99.8 236.04999999999998L107 235.74999999999997V242.54999999999998L108 243.04999999999998V245.04999999999998H101.5L100.5 247.04999999999998L99.8 245.54999999999998Z" fill="url(#fold)"/>
<path d="M99.8 236.04999999999998L101.6 235.94999999999996V245.04999999999998L100.5 247.04999999999998L99.8 245.54999999999998Z" fill="#fff0b8"/>
<text transform="translate(112.8 243.34999999999997) scale(0.86 1)" font-size="6.5" font-weight="bold" fill="#ffffff" stroke="#ffffff" stroke-width="0.14">[CSC]</text>
<text x="239.6" y="243.34999999999997" font-size="6.4" textLength="16.0" lengthAdjust="spacingAndGlyphs" font-weight="bold" fill="#ffffff" stroke="#ffffff" stroke-width="0.14">&lt;DIR&gt;</text>
<text x="265.6" y="243.34999999999997" font-size="6.4" textLength="50.8" lengthAdjust="spacingAndGlyphs" font-weight="bold" fill="#ffffff" stroke="#ffffff" stroke-width="0.14">20.02.2022 13:35:56</text>
<text x="318.2" y="243.34999999999997" font-size="6.4" textLength="18.9" lengthAdjust="spacingAndGlyphs" font-weight="bold" fill="#ffffff" stroke="#ffffff" stroke-width="0.14">d--------</text>
<path d="M99.8 250.715L107 250.415V257.215L108 257.715V259.715H101.5L100.5 261.715L99.8 260.215Z" fill="url(#fold)"/>
<path d="M99.8 250.715L101.6 250.61499999999998V259.715L100.5 261.715L99.8 260.215Z" fill="#fff0b8"/>
<text transform="translate(112.8 258.01500000000004) scale(0.86 1)" font-size="6.5" font-weight="bold" fill="#ffffff" stroke="#ffffff" stroke-width="0.14">[Cursors]</text>
<text x="239.6" y="258.01500000000004" font-size="6.4" textLength="16.0" lengthAdjust="spacingAndGlyphs" font-weight="bold" fill="#ffffff" stroke="#ffffff" stroke-width="0.14">&lt;DIR&gt;</text>
<text x="265.6" y="258.01500000000004" font-size="6.4" textLength="50.8" lengthAdjust="spacingAndGlyphs" font-weight="bold" fill="#ffffff" stroke="#ffffff" stroke-width="0.14">07.12.2019 12:14:54</text>
<text x="318.2" y="258.01500000000004" font-size="6.4" textLength="18.9" lengthAdjust="spacingAndGlyphs" font-weight="bold" fill="#ffffff" stroke="#ffffff" stroke-width="0.14">d--------</text>
<path d="M99.8 265.38L107 265.08V271.88L108 272.38V274.38H101.5L100.5 276.38L99.8 274.88Z" fill="url(#fold)"/>
<path d="M99.8 265.38L101.6 265.28V274.38L100.5 276.38L99.8 274.88Z" fill="#fff0b8"/>
<text transform="translate(112.8 272.68) scale(0.86 1)" font-size="6.5" font-weight="bold" fill="#ffffff" stroke="#ffffff" stroke-width="0.14">[debug]</text>
<text x="239.6" y="272.68" font-size="6.4" textLength="16.0" lengthAdjust="spacingAndGlyphs" font-weight="bold" fill="#ffffff" stroke="#ffffff" stroke-width="0.14">&lt;DIR&gt;</text>
<text x="265.6" y="272.68" font-size="6.4" textLength="50.8" lengthAdjust="spacingAndGlyphs" font-weight="bold" fill="#ffffff" stroke="#ffffff" stroke-width="0.14">12.05.2022 22:38:23</text>
<text x="318.2" y="272.68" font-size="6.4" textLength="18.9" lengthAdjust="spacingAndGlyphs" font-weight="bold" fill="#ffffff" stroke="#ffffff" stroke-width="0.14">d--------</text>
<path d="M99.8 280.04499999999996L107 279.74499999999995V286.54499999999996L108 287.04499999999996V289.04499999999996H101.5L100.5 291.04499999999996L99.8 289.54499999999996Z" fill="url(#fold)"/>
<path d="M99.8 280.04499999999996L101.6 279.94499999999994V289.04499999999996L100.5 291.04499999999996L99.8 289.54499999999996Z" fill="#fff0b8"/>
<text transform="translate(112.8 287.34499999999997) scale(0.86 1)" font-size="6.5" font-weight="bold" fill="#ffffff" stroke="#ffffff" stroke-width="0.14">[diagnostics]</text>
<text x="239.6" y="287.34499999999997" font-size="6.4" textLength="16.0" lengthAdjust="spacingAndGlyphs" font-weight="bold" fill="#ffffff" stroke="#ffffff" stroke-width="0.14">&lt;DIR&gt;</text>
<text x="265.6" y="287.34499999999997" font-size="6.4" textLength="50.8" lengthAdjust="spacingAndGlyphs" font-weight="bold" fill="#ffffff" stroke="#ffffff" stroke-width="0.14">07.12.2019 12:31:03</text>
<text x="318.2" y="287.34499999999997" font-size="6.4" textLength="18.9" lengthAdjust="spacingAndGlyphs" font-weight="bold" fill="#ffffff" stroke="#ffffff" stroke-width="0.14">d--------</text>
<path d="M99.8 294.71000000000004L107 294.41V301.21000000000004L108 301.71000000000004V303.71000000000004H101.5L100.5 305.71000000000004L99.8 304.21000000000004Z" fill="url(#fold)"/>
<path d="M99.8 294.71000000000004L101.6 294.61V303.71000000000004L100.5 305.71000000000004L99.8 304.21000000000004Z" fill="#fff0b8"/>
<text transform="translate(112.8 302.01000000000005) scale(0.86 1)" font-size="6.5" font-weight="bold" fill="#ffffff" stroke="#ffffff" stroke-width="0.14">[DiagTrack]</text>
<text x="239.6" y="302.01000000000005" font-size="6.4" textLength="16.0" lengthAdjust="spacingAndGlyphs" font-weight="bold" fill="#ffffff" stroke="#ffffff" stroke-width="0.14">&lt;DIR&gt;</text>
<text x="265.6" y="302.01000000000005" font-size="6.4" textLength="50.8" lengthAdjust="spacingAndGlyphs" font-weight="bold" fill="#ffffff" stroke="#ffffff" stroke-width="0.14">06.10.2021 16:36:17</text>
<text x="318.2" y="302.01000000000005" font-size="6.4" textLength="18.9" lengthAdjust="spacingAndGlyphs" font-weight="bold" fill="#ffffff" stroke="#ffffff" stroke-width="0.14">d--------</text>
<path d="M99.8 309.375L107 309.075V315.875L108 316.375V318.375H101.5L100.5 320.375L99.8 318.875Z" fill="url(#fold)"/>
<path d="M99.8 309.375L101.6 309.275V318.375L100.5 320.375L99.8 318.875Z" fill="#fff0b8"/>
<text transform="translate(112.8 316.675) scale(0.86 1)" font-size="6.5" font-weight="bold" fill="#ffffff" stroke="#ffffff" stroke-width="0.14">[DigitalLocker]</text>
<text x="239.6" y="316.675" font-size="6.4" textLength="16.0" lengthAdjust="spacingAndGlyphs" font-weight="bold" fill="#ffffff" stroke="#ffffff" stroke-width="0.14">&lt;DIR&gt;</text>
<text x="265.6" y="316.675" font-size="6.4" textLength="50.8" lengthAdjust="spacingAndGlyphs" font-weight="bold" fill="#ffffff" stroke="#ffffff" stroke-width="0.14">07.12.2019 17:34:32</text>
<text x="318.2" y="316.675" font-size="6.4" textLength="18.9" lengthAdjust="spacingAndGlyphs" font-weight="bold" fill="#ffffff" stroke="#ffffff" stroke-width="0.14">d--------</text>
<path d="M99.8 324.03999999999996L107 323.73999999999995V330.53999999999996L108 331.03999999999996V333.03999999999996H101.5L100.5 335.03999999999996L99.8 333.53999999999996Z" fill="url(#fold)"/>
<path d="M99.8 324.03999999999996L101.6 323.93999999999994V333.03999999999996L100.5 335.03999999999996L99.8 333.53999999999996Z" fill="#fff0b8"/>
<text transform="translate(112.8 331.34) scale(0.86 1)" font-size="6.5" font-weight="bold" fill="#ffffff" stroke="#ffffff" stroke-width="0.14">[en-US]</text>
<text x="239.6" y="331.34" font-size="6.4" textLength="16.0" lengthAdjust="spacingAndGlyphs" font-weight="bold" fill="#ffffff" stroke="#ffffff" stroke-width="0.14">&lt;DIR&gt;</text>
<text x="265.6" y="331.34" font-size="6.4" textLength="50.8" lengthAdjust="spacingAndGlyphs" font-weight="bold" fill="#ffffff" stroke="#ffffff" stroke-width="0.14">07.12.2019 17:34:32</text>
<text x="318.2" y="331.34" font-size="6.4" textLength="18.9" lengthAdjust="spacingAndGlyphs" font-weight="bold" fill="#ffffff" stroke="#ffffff" stroke-width="0.14">d--------</text>
<path d="M99.8 338.705L107 338.405V345.205L108 345.705V347.705H101.5L100.5 349.705L99.8 348.205Z" fill="url(#fold)"/>
<path d="M99.8 338.705L101.6 338.60499999999996V347.705L100.5 349.705L99.8 348.205Z" fill="#fff0b8"/>
<text transform="translate(112.8 346.005) scale(0.86 1)" font-size="6.5" font-weight="bold" fill="#ffffff" stroke="#ffffff" stroke-width="0.14">[GameBarPresenceWriter]</text>
<text x="239.6" y="346.005" font-size="6.4" textLength="16.0" lengthAdjust="spacingAndGlyphs" font-weight="bold" fill="#ffffff" stroke="#ffffff" stroke-width="0.14">&lt;DIR&gt;</text>
<text x="265.6" y="346.005" font-size="6.4" textLength="50.8" lengthAdjust="spacingAndGlyphs" font-weight="bold" fill="#ffffff" stroke="#ffffff" stroke-width="0.14">07.12.2019 12:14:52</text>
<text x="318.2" y="346.005" font-size="6.4" textLength="18.9" lengthAdjust="spacingAndGlyphs" font-weight="bold" fill="#ffffff" stroke="#ffffff" stroke-width="0.14">d--------</text>
<path d="M99.8 353.37L107 353.07V359.87L108 360.37V362.37H101.5L100.5 364.37L99.8 362.87Z" fill="url(#fold)"/>
<path d="M99.8 353.37L101.6 353.27V362.37L100.5 364.37L99.8 362.87Z" fill="#fff0b8"/>
<text transform="translate(112.8 360.67) scale(0.86 1)" font-size="6.5" font-weight="bold" fill="#ffffff" stroke="#ffffff" stroke-width="0.14">[Globalization]</text>
<text x="239.6" y="360.67" font-size="6.4" textLength="16.0" lengthAdjust="spacingAndGlyphs" font-weight="bold" fill="#ffffff" stroke="#ffffff" stroke-width="0.14">&lt;DIR&gt;</text>
<text x="265.6" y="360.67" font-size="6.4" textLength="50.8" lengthAdjust="spacingAndGlyphs" font-weight="bold" fill="#ffffff" stroke="#ffffff" stroke-width="0.14">07.12.2019 12:31:03</text>
<text x="318.2" y="360.67" font-size="6.4" textLength="18.9" lengthAdjust="spacingAndGlyphs" font-weight="bold" fill="#ffffff" stroke="#ffffff" stroke-width="0.14">d--------</text>
<path d="M99.8 368.03499999999997L107 367.73499999999996V374.53499999999997L108 375.03499999999997V377.03499999999997H101.5L100.5 379.03499999999997L99.8 377.53499999999997Z" fill="url(#fold)"/>
<path d="M99.8 368.03499999999997L101.6 367.93499999999995V377.03499999999997L100.5 379.03499999999997L99.8 377.53499999999997Z" fill="#fff0b8"/>
<text transform="translate(112.8 375.335) scale(0.86 1)" font-size="6.5" font-weight="bold" fill="#ffffff" stroke="#ffffff" stroke-width="0.14">[Help]</text>
<text x="239.6" y="375.335" font-size="6.4" textLength="16.0" lengthAdjust="spacingAndGlyphs" font-weight="bold" fill="#ffffff" stroke="#ffffff" stroke-width="0.14">&lt;DIR&gt;</text>
<text x="265.6" y="375.335" font-size="6.4" textLength="50.8" lengthAdjust="spacingAndGlyphs" font-weight="bold" fill="#ffffff" stroke="#ffffff" stroke-width="0.14">07.12.2019 17:34:32</text>
<text x="318.2" y="375.335" font-size="6.4" textLength="18.9" lengthAdjust="spacingAndGlyphs" font-weight="bold" fill="#ffffff" stroke="#ffffff" stroke-width="0.14">d--------</text>
<path d="M99.8 382.69999999999993L107 382.3999999999999V389.19999999999993L108 389.69999999999993V391.69999999999993H101.5L100.5 393.69999999999993L99.8 392.19999999999993Z" fill="url(#fold)"/>
<path d="M99.8 382.69999999999993L101.6 382.5999999999999V391.69999999999993L100.5 393.69999999999993L99.8 392.19999999999993Z" fill="#fff0b8"/>
<text transform="translate(112.8 389.99999999999994) scale(0.86 1)" font-size="6.5" font-weight="bold" fill="#ffffff" stroke="#ffffff" stroke-width="0.14">[IdentityCRL]</text>
<text x="239.6" y="389.99999999999994" font-size="6.4" textLength="16.0" lengthAdjust="spacingAndGlyphs" font-weight="bold" fill="#ffffff" stroke="#ffffff" stroke-width="0.14">&lt;DIR&gt;</text>
<text x="265.6" y="389.99999999999994" font-size="6.4" textLength="50.8" lengthAdjust="spacingAndGlyphs" font-weight="bold" fill="#ffffff" stroke="#ffffff" stroke-width="0.14">07.12.2019 12:31:03</text>
<text x="318.2" y="389.99999999999994" font-size="6.4" textLength="18.9" lengthAdjust="spacingAndGlyphs" font-weight="bold" fill="#ffffff" stroke="#ffffff" stroke-width="0.14">d--------</text>
<rect x="365.8" y="72" width="7.3" height="322" fill="#1a1a1a" />
<rect x="366.6" y="79" width="5.8" height="67" fill="#4e4e4e" />
<path d="M367.8 76.6l1.7-1.6l1.7 1.6" stroke="#d0d0d0" stroke-width="0.7" fill="none"/>
<path d="M367.8 389.4l1.7 1.6l1.7-1.6" stroke="#d0d0d0" stroke-width="0.7" fill="none"/>
<rect x="377" y="86" width="276" height="308" fill="#2b2b2b" />
<rect x="378.3" y="87.3" width="67.3" height="56.3" fill="#2b2b2b" stroke="#8c8c8c" stroke-width="1"/>
<text x="378.90000000000003" y="150.29999999999998" font-size="6.8" textLength="7.4" lengthAdjust="spacingAndGlyphs" font-weight="bold" fill="#ffffff" stroke="#ffffff" stroke-width="0.12">[..]</text>
<rect x="447.2" y="87.3" width="67.4" height="56.3" fill="#2b2b2b" stroke="#8c8c8c" stroke-width="1"/>
<text x="447.8" y="150.29999999999998" font-size="6.8" textLength="26.1" lengthAdjust="spacingAndGlyphs" font-weight="bold" fill="#ffffff" stroke="#ffffff" stroke-width="0.12">img10.jpg</text>
<rect x="515.0" y="87.3" width="68.3" height="56.3" fill="#2b2b2b" stroke="#8c8c8c" stroke-width="1"/>
<text x="515.6" y="150.29999999999998" font-size="6.8" textLength="27" lengthAdjust="spacingAndGlyphs" font-weight="bold" fill="#ffffff" stroke="#ffffff" stroke-width="0.12">img11.jpg</text>
<rect x="584.0" y="87.3" width="67.3" height="56.3" fill="#2b2b2b" stroke="#8c8c8c" stroke-width="1"/>
<text x="584.6" y="150.29999999999998" font-size="6.8" textLength="26.1" lengthAdjust="spacingAndGlyphs" font-weight="bold" fill="#ffffff" stroke="#ffffff" stroke-width="0.12">img12.jpg</text>
<rect x="378.3" y="152.5" width="67.3" height="56.9" fill="#2b2b2b" stroke="#8c8c8c" stroke-width="1"/>
<text x="378.90000000000003" y="216.1" font-size="6.8" textLength="23" lengthAdjust="spacingAndGlyphs" font-weight="bold" fill="#ffffff" stroke="#ffffff" stroke-width="0.12">img7.jpg</text>
<rect x="447.2" y="152.5" width="67.4" height="56.9" fill="#2b2b2b" stroke="#8c8c8c" stroke-width="1"/>
<text x="447.8" y="216.1" font-size="6.8" textLength="23" lengthAdjust="spacingAndGlyphs" font-weight="bold" fill="#ffffff" stroke="#ffffff" stroke-width="0.12">img8.jpg</text>
<rect x="515.0" y="152.5" width="68.3" height="56.9" fill="#2b2b2b" stroke="#8c8c8c" stroke-width="1"/>
<text x="515.6" y="216.1" font-size="6.8" textLength="23" lengthAdjust="spacingAndGlyphs" font-weight="bold" fill="#ffffff" stroke="#ffffff" stroke-width="0.12">img9.jpg</text>
<defs>
<linearGradient id="fold" x1="0" y1="0" x2="1" y2="0"><stop offset="0" stop-color="#f6dc80"/><stop offset="1" stop-color="#e8c458"/></linearGradient>
<filter id="bl" x="-20%" y="-20%" width="140%" height="140%"><feGaussianBlur stdDeviation="0.5"/></filter>
<filter id="bl2" x="-50%" y="-50%" width="200%" height="200%"><feGaussianBlur stdDeviation="2.5"/></filter>
<filter id="bl3" x="-50%" y="-50%" width="200%" height="200%"><feGaussianBlur stdDeviation="4"/></filter>
<clipPath id="c10"><rect x="452.7" y="97.6" width="55.7" height="35.5"/></clipPath>
<clipPath id="c11"><rect x="521.3" y="97.7" width="55.9" height="35.5"/></clipPath>
<clipPath id="c12"><rect x="589.8" y="97.7" width="56.4" height="35.5"/></clipPath>
<clipPath id="c7"><rect x="383.8" y="162.9" width="56" height="35.1"/></clipPath>
<clipPath id="c8"><rect x="452.9" y="162.9" width="55.1" height="35.1"/></clipPath>
<clipPath id="c9"><rect x="521.4" y="171.6" width="55.8" height="18.2"/></clipPath>
<radialGradient id="arrowg" cx="0.4" cy="0.35" r="0.8"><stop offset="0" stop-color="#a8e870"/><stop offset="1" stop-color="#4aa818"/></radialGradient>
</defs>
<!-- img10 -->
<rect x="452.2" y="97.1" width="56.7" height="36.5" fill="#080404"/>
<g clip-path="url(#c10)">
<rect x="452.7" y="97.6" width="55.7" height="35.5" fill="#383010"/>
<g filter="url(#bl3)">
<rect x="446" y="91" width="34" height="10" fill="#4aa4b4"/>
<rect x="446" y="98" width="8" height="12" fill="#3a8890"/>
<rect x="492" y="92" width="20" height="8" fill="#1e4444"/>
<ellipse cx="493" cy="123" rx="9" ry="9" fill="#b45c12"/>
<ellipse cx="505" cy="128" rx="4" ry="6" fill="#c06414"/>
<ellipse cx="468" cy="116" rx="10" ry="7" fill="#584a1a"/>
<rect x="446" y="126" width="26" height="12" fill="#141006"/>
</g>
<g filter="url(#bl)">
<path d="M486 102.5l2.6 4l2.4-3.8l2.6 3.6l3.2-3.6l-0.8 8l-3.5 5.5h-2.5l-3.2-5.5z" fill="#f84a18"/>
<path d="M489 106l3 9l3-8z" fill="#ff8a30"/>
<path d="M492.3 115.5l0.6 18" stroke="#4a2810" stroke-width="1"/>
<path d="M467.8 114.5l2.6-1.8l2.8 1.2l0.4 8l-2 3.6h-1.8l-1.8-3.6z" fill="#e82a10"/>
<path d="M473 116l3 2l-2.5 3z" fill="#c83a10"/>
<path d="M470.6 125.5v8" stroke="#3a2010" stroke-width="1"/>
</g>
</g>
<!-- img11 -->
<rect x="520.8" y="97.2" width="56.9" height="36.5" fill="#060606"/>
<g clip-path="url(#c11)">
<rect x="521.3" y="97.7" width="55.9" height="35.5" fill="#d4efc6"/>
<g filter="url(#bl3)">
<rect x="518" y="95" width="14" height="42" fill="#b4e4a0"/>
<ellipse cx="545" cy="110" rx="10" ry="12" fill="#e4f6dc"/>
<rect x="570" y="95" width="10" height="42" fill="#c8ecb8"/>
</g>
<rect x="521.3" y="97.7" width="1.2" height="35.5" fill="#a0e080"/>
<g filter="url(#bl)">
<path d="M561 117l6-2.5l7-2.5l4 1l-2 3l-5 2.5l6 1.5l2 3l-2 2.5l-5-0.5l-6-2.5z" fill="#f8b4b0"/>
<path d="M559 119l-5 2l-6 4l-2 4l4 0.5l7-3l3-3z" fill="#f8a0a0"/>
<path d="M560.5 115l-3 3l2 4l5 0l2-3l-2-4z" fill="#f8e8e0"/>
<path d="M561 121l-0.5 6l1.5 5l2-1l1.5-5l-1-5z" fill="#e84040"/>
<path d="M560.2 102.5c-1.2 3-1 7 0.5 12" stroke="#e02828" stroke-width="1.2" fill="none"/>
<circle cx="560.5" cy="102.3" r="1.2" fill="#e01818"/>
<path d="M556 113l3 1.5l3 3l1.5-1l-2-3.5l-3-0.5z" fill="#e02020"/>
<path d="M563 131l1 3" stroke="#40a020" stroke-width="1.2"/>
</g>
</g>
<!-- img12 -->
<rect x="589.3" y="97.2" width="57.4" height="36.5" fill="#0c0420"/>
<g clip-path="url(#c12)">
<rect x="589.8" y="97.7" width="56.4" height="35.5" fill="#ece890"/>
<g filter="url(#bl3)">
<rect x="585" y="92" width="40" height="14" fill="#e4e440"/>
<rect x="585" y="104" width="35" height="14" fill="#eeeaa0"/>
<rect x="630" y="100" width="20" height="20" fill="#f2dcb0"/>
<rect x="585" y="123" width="65" height="14" fill="#88d428"/>
</g>
<rect x="589.8" y="97.7" width="56.4" height="1.3" fill="#e0e820"/>
<g filter="url(#bl)">
<path d="M629 98c-5 4-8 10-7.5 16c1 6 5 11 9 15c0.5-8 1-20-1.5-31z" fill="#6cbc28"/>
<path d="M629.8 101c0.5 9 0.8 18 1.2 28" stroke="#3a8a18" stroke-width="0.8" fill="none"/>
<path d="M641 97c-4 5-7 11-6.5 16c0.5 4 1.5 8 2.5 11c2.5-7 5-16 5-27z" fill="#70c030"/>
<path d="M640 99c-1 8-2.5 17-3.8 25" stroke="#3a8a18" stroke-width="0.7" fill="none"/>
</g>
</g>
<!-- img7 -->
<rect x="383.3" y="162.4" width="57" height="36.1" fill="#1c0808"/>
<g clip-path="url(#c7)">
<rect x="383.8" y="162.9" width="56" height="35.1" fill="#30a6b2"/>
<g filter="url(#bl3)">
<ellipse cx="390" cy="185" rx="8" ry="14" fill="#1a8c9a"/>
<ellipse cx="428" cy="190" rx="14" ry="8" fill="#60c0c8"/>
<ellipse cx="405" cy="196" rx="12" ry="4" fill="#40a8b0"/>
<ellipse cx="436" cy="175" rx="5" ry="12" fill="#50bcc4"/>
</g>
<g filter="url(#bl)">
<path d="M413 176L410.5 166.5L415.5 172.5L417.5 171L419 165L424 163L437 162.6L436.5 166L432 169.5L428 170.5L424 171L421 175L417.5 178L414.5 180.5L413 186.5L411.5 181L406 179L403.5 175.5L409.5 176z" fill="#d41428"/>
<path d="M405 173.5l3.5 1.5l-1 2z" fill="#e02860"/>
<path d="M418.5 165.5l3-1.5l1.5 3l-2.5 2z" fill="#ff4a70"/>
<path d="M426 166l4-2l2 2l-3 3z" fill="#ffa0a0"/>
<path d="M416.5 174l3-2l1 2l-2.5 2z" fill="#ff9080"/>
<path d="M432 164l3-1l-1 3z" fill="#ff6080"/>
</g>
</g>
<!-- img8 -->
<rect x="452.4" y="162.4" width="56.1" height="36.1" fill="#141014"/>
<g clip-path="url(#c8)">
<rect x="452.9" y="162.9" width="55.1" height="35.1" fill="#f8eef8"/>
<g filter="url(#bl3)">
<rect x="448" y="194" width="64" height="8" fill="#f2bce8"/>
<rect x="448" y="160" width="7" height="40" fill="#f6dcf0"/>
</g>
<g filter="url(#bl)">
<path d="M491.5 180.5L482 175.5L474 171.5L472.5 172.5L478 177L485 181.5L490 182.5z" fill="#f4a428"/>
<path d="M491 180L486.5 172L482 166L480.5 167L483 174L487.5 180z" fill="#f2a020"/>
<path d="M492 179.5L490 170L488.5 164L490 163.5L493 170L493.5 179z" fill="#f6a828"/>
<path d="M493 179.5L495 171L497 165L498.5 164.5L498 172L495 180z" fill="#f0a030"/>
<path d="M494 180.5L499 174L502 168.5L503 169L501 175L496 181z" fill="#f4b040"/>
<path d="M490 182L482 183L472 184.8L471.5 184L481 181.5L489 180.5z" fill="#eca040"/>
<path d="M488 180.5l4.5-1.5l2.5 2l-1 3l-3.5 1l-2.5-2z" fill="#7a1c70"/>
<path d="M491.5 184.5l4 13.5" stroke="#9a4858" stroke-width="0.8"/>
</g>
</g>
<!-- img9 -->
<rect x="520.9" y="171.1" width="56.8" height="19.2" fill="#080408"/>
<g clip-path="url(#c9)">
<rect x="521.4" y="171.6" width="55.8" height="18.2" fill="#c4e8d6"/>
<g filter="url(#bl2)">
<rect x="518" y="168" width="6" height="24" fill="#80d0a8"/>
<ellipse cx="538" cy="181" rx="10" ry="6" fill="#f2f4f0"/>
<rect x="566" y="168" width="14" height="24" fill="#7ccca4"/>
</g>
<g filter="url(#bl)">
<circle cx="556.2" cy="180" r="3.4" fill="#e0308a"/>
<circle cx="553.2" cy="178.2" r="1.4" fill="#e8409a"/><circle cx="559.2" cy="178.2" r="1.4" fill="#d82880"/><circle cx="553.4" cy="182.2" r="1.4" fill="#e03c90"/><circle cx="559" cy="182.4" r="1.4" fill="#d02878"/><circle cx="556.2" cy="176.4" r="1.3" fill="#e8409a"/><circle cx="556.4" cy="183.6" r="1.2" fill="#d83088"/>
<circle cx="556.2" cy="180" r="1.1" fill="#801848"/>
<path d="M558 183l3 6" stroke="#c07080" stroke-width="0.6"/>
</g>
</g>
<!-- up arrow in first cell -->
<path d="M411.6 109.6L416.8 115.5H414.3V120H408.7V115.5H406.6Z" fill="url(#arrowg)"/>

<rect x="97" y="393.4" width="277" height="8.2" fill="#2f2f2f" />
<text x="97.2" y="399.2" font-size="5.8" textLength="109.6" lengthAdjust="spacingAndGlyphs" fill="#e0e0e0" >Selected: 0 of 8.8 M, files: 0 of 22, folders: 0 of 76</text>
<rect x="378" y="393.4" width="275" height="8.2" fill="#2f2f2f" />
<text x="378.7" y="399.2" font-size="5.8" textLength="7" lengthAdjust="spacingAndGlyphs" font-weight="bold" fill="#e0e0e0" >[..]</text>
<text x="574" y="399.2" font-size="5.6" textLength="13.7" lengthAdjust="spacingAndGlyphs" fill="#e0e0e0" >&lt;DIR&gt;</text>
<text x="590.9" y="399.2" font-size="5.6" textLength="42.2" lengthAdjust="spacingAndGlyphs" fill="#e8e8e8" >07.12.2019 12:15:01</text>
<text x="635.8" y="399.2" font-size="5.6" textLength="17.9" lengthAdjust="spacingAndGlyphs" fill="#e0e0e0" >dr-------</text>
<rect x="373.6" y="63.6" width="4.3" height="338" fill="#363636" />
<rect x="97" y="401.6" width="558" height="12" fill="#323232" />
<rect x="97" y="401.3" width="558" height="0.9" fill="#4a4a4a" />
<text x="97.5" y="410.2" font-size="5.8" textLength="29.5" lengthAdjust="spacingAndGlyphs" fill="#e0e0e0" >c:\Windows&gt;</text>
<rect x="128.9" y="402.8" width="525.6" height="9.8" fill="#2b2b2b" stroke="#6a6a6a" stroke-width="0.8"/>
<path d="M649.6 406.8l1.6 1.4l1.6-1.4" stroke="#c8c8c8" stroke-width="0.6" fill="none"/>
<rect x="97" y="413.6" width="558" height="9.4" fill="#323232" />
<text x="119.5" y="420.8" font-size="6.4" textLength="20.1" lengthAdjust="spacingAndGlyphs" fill="#e0e0e0" >View F3</text>
<text x="185.4" y="420.8" font-size="6.4" textLength="17.8" lengthAdjust="spacingAndGlyphs" fill="#e0e0e0" >Edit F4</text>
<text x="249.8" y="420.8" font-size="6.4" textLength="21.2" lengthAdjust="spacingAndGlyphs" fill="#e0e0e0" >Copy F5</text>
<text x="316.8" y="420.8" font-size="6.4" textLength="23.1" lengthAdjust="spacingAndGlyphs" fill="#e0e0e0" >Move F6</text>
<text x="385.3" y="420.8" font-size="6.4" textLength="30.9" lengthAdjust="spacingAndGlyphs" fill="#e0e0e0" >Directory F7</text>
<text x="462.7" y="420.8" font-size="6.4" textLength="24.3" lengthAdjust="spacingAndGlyphs" fill="#e0e0e0" >Delete F8</text>
<text x="533.5" y="420.8" font-size="6.4" textLength="28.7" lengthAdjust="spacingAndGlyphs" fill="#e0e0e0" >Terminal F9</text>
<text x="608.7" y="420.8" font-size="6.4" textLength="24.2" lengthAdjust="spacingAndGlyphs" fill="#e0e0e0" >Exit Alt+X</text></svg>
</body></html>
